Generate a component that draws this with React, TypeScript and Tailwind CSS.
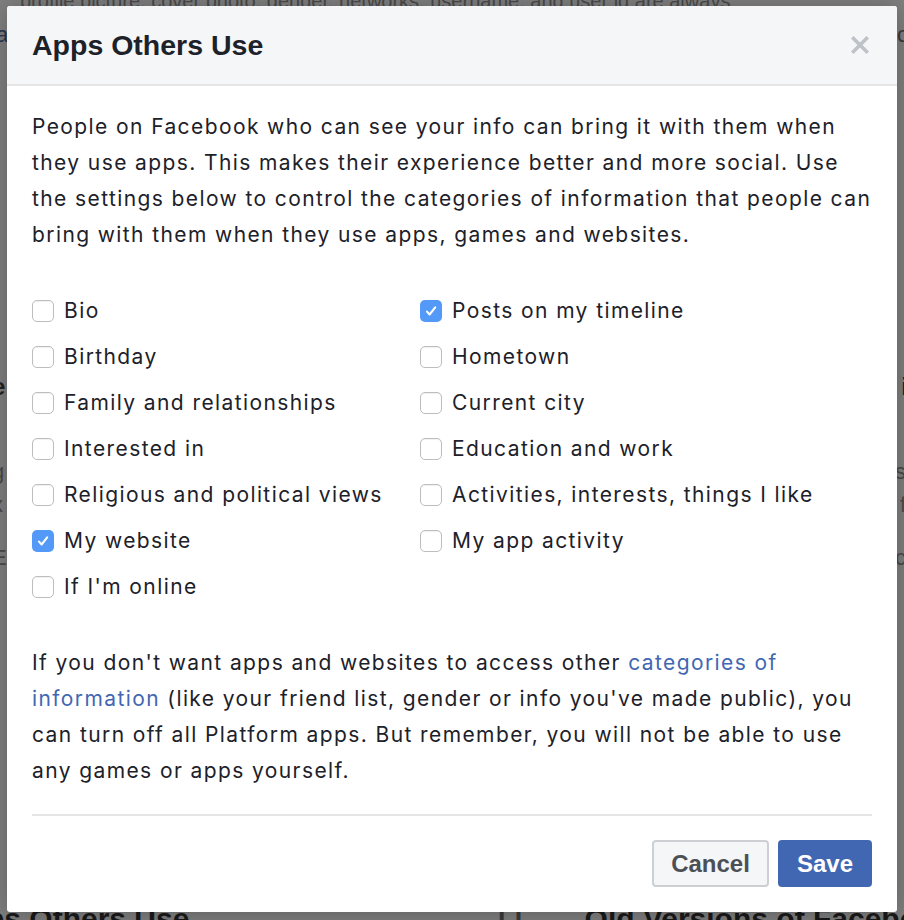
import { useState } from "react";

type Item = { label: string; checked: boolean };

const items: Item[] = [
  { label: "Bio", checked: false },
  { label: "Birthday", checked: false },
  { label: "Family and relationships", checked: false },
  { label: "Interested in", checked: false },
  { label: "Religious and political views", checked: false },
  { label: "My website", checked: true },
  { label: "If I'm online", checked: false },
  { label: "Posts on my timeline", checked: true },
  { label: "Hometown", checked: false },
  { label: "Current city", checked: false },
  { label: "Education and work", checked: false },
  { label: "Activities, interests, things I like", checked: false },
  { label: "My app activity", checked: false },
];

const Box = ({ checked }: { checked: boolean }) =>
  checked ? (
    <span className="flex h-[22px] w-[22px] shrink-0 items-center justify-center rounded-[5px] bg-[#5399f7]">
      <svg width="14" height="14" viewBox="0 0 14 14" aria-hidden="true">
        <path d="M3 7.6l2.6 2.9L11.2 3.4" stroke="white" strokeWidth="2.1" fill="none" strokeLinecap="round" strokeLinejoin="round" />
      </svg>
    </span>
  ) : (
    <span className="h-[22px] w-[22px] shrink-0 rounded-[5px] border border-[#bdbdbd] bg-white shadow-[inset_0_1px_1px_rgba(0,0,0,0.06)]" />
  );

export default function App() {
  const [values, setValues] = useState(items.map((i) => i.checked));

  return (
    <div className="relative h-[920px] w-[904px] overflow-hidden bg-[#7f7f7f] font-['Liberation_Sans',Arial,sans-serif] text-[#2a2a2a]">
      {/* page behind the dialog */}
      <div className="-mt-[14px] pl-[20px] text-[20px] text-[#4a4a4a] whitespace-nowrap">
        profile picture, cover photo, gender, networks, username, and user id are always
      </div>
      <div className="mt-[2px] flex justify-between text-[22px] text-[#2a3550]">
        <span className="-ml-[4px]">a</span>
        <span className="-mr-[4px] text-[#3a3a3a]">c</span>
      </div>
      <div className="mt-[318px] flex justify-between text-[24px] font-bold text-[#222]">
        <span className="-ml-[8px]">e</span>
        <span className="-mr-[4px]">i</span>
      </div>
      <div className="mt-[50px] flex justify-between text-[22px] text-[#4a4a4a]">
        <span className="-ml-[8px]">g</span>
        <span className="-mr-[2px]">s</span>
      </div>
      <div className="flex justify-between text-[22px] text-[#4a4a4a]">
        <span className="-ml-[8px]">x</span>
        <span className="-mr-[2px]">f</span>
      </div>
      <div className="mt-[20px] flex justify-between text-[22px] text-[#4a4a4a]">
        <span className="-ml-[8px]">E</span>
        <span className="-mr-[2px]">c</span>
      </div>
      <div className="mt-[322px] flex items-start text-[30px] font-bold text-[#1a1a1a] whitespace-nowrap">
        <span className="-ml-[14px]">ps Others Use</span>
        <span className="ml-[308px] text-[#3a3a3a]">| |</span>
        <span className="ml-[62px]">Old Versions of Facebook</span>
      </div>

      {/* dialog */}
      <div className="absolute left-[7px] top-[6px] flex h-[906px] w-[890px] flex-col overflow-hidden rounded-[3px] bg-white shadow-[0_2px_26px_rgba(0,0,0,0.25)]">
        <div className="flex h-[80px] shrink-0 items-center justify-between border-b-2 border-[#e5e5e5] bg-[#f5f6f7] pl-[25px] pr-[28px]">
          <h2 className="text-[28.5px] font-bold text-[#1d2129]">Apps Others Use</h2>
          <svg width="18" height="18" viewBox="0 0 18 18" aria-hidden="true">
            <path d="M2.5 2.5l13 13M15.5 2.5l-13 13" stroke="#bec3c9" strokeWidth="3.6" strokeLinecap="square" />
          </svg>
        </div>

        <div className="flex flex-1 flex-col px-[25px] pt-[23px] pb-[25px] font-['Inter',sans-serif] text-[21px] leading-[36px] tracking-[1.4px] text-[#1d2129]">
          <p className="whitespace-nowrap">
            People on Facebook who can see your info can bring it with them when
            <br />
            they use apps. This makes their experience better and more social. Use
            <br />
            the settings below to control the categories of information that people can
            <br />
            bring with them when they use apps, games and websites.
          </p>

          <div className="mt-[35px] grid grid-flow-col grid-cols-[388px_1fr] grid-rows-[repeat(7,46px)]">
            {items.map((item, i) => (
              <label
                key={item.label}
                className="flex cursor-pointer items-center gap-[10px] whitespace-nowrap"
                onClick={() => setValues((v) => v.map((x, j) => (j === i ? !x : x)))}
              >
                <Box checked={values[i]} />
                <span>{item.label}</span>
              </label>
            ))}
          </div>

          <p className="mt-[35px] whitespace-nowrap">
            If you don't want apps and websites to access other{" "}
            <a className="text-[#4267b2]">categories of</a>
            <br />
            <a className="text-[#4267b2]">information</a> (like your friend list, gender or info you've made public), you
            <br />
            can turn off all Platform apps. But remember, you will not be able to use
            <br />
            any games or apps yourself.
          </p>

          <div className="mt-[25px] h-[2px] bg-[#e5e5e5]" />

          <div className="mt-auto flex justify-end gap-[9px] font-['Liberation_Sans',Arial,sans-serif] text-[24px] font-bold tracking-normal">
            <button className="h-[47px] w-[117px] rounded-[4px] border-2 border-[#ccd0d5] bg-[#f5f6f7] text-[#4b4f56]">
              Cancel
            </button>
            <button className="h-[47px] w-[94px] rounded-[4px] bg-[#4267b2] text-white">Save</button>
          </div>
        </div>
      </div>
    </div>
  );
}
